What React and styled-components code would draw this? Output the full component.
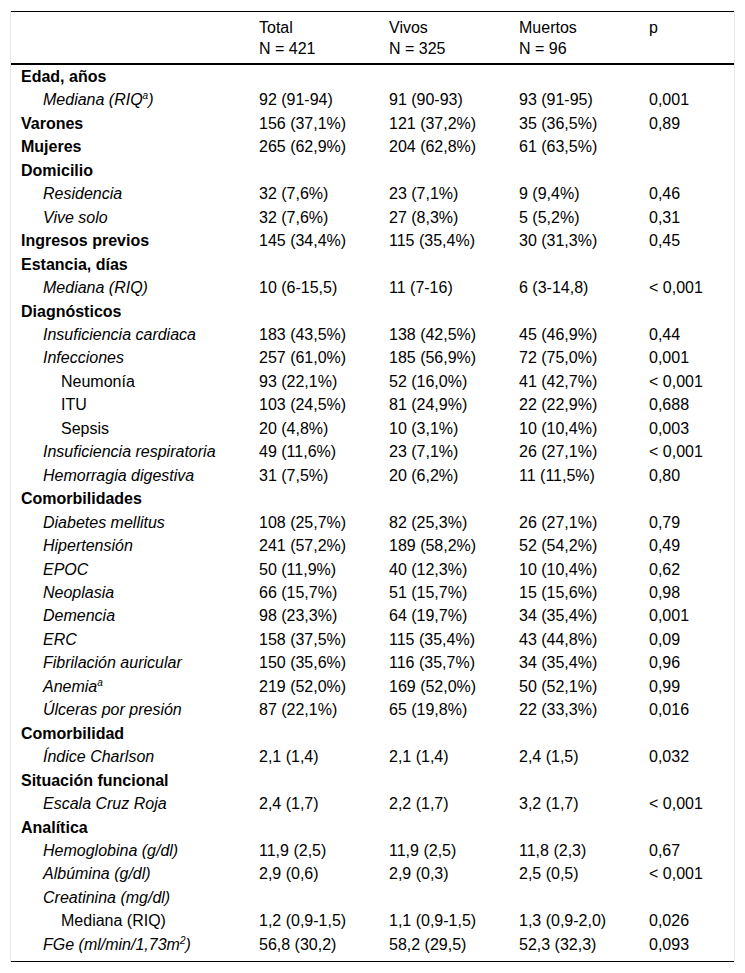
import React from "react";
import styled, { createGlobalStyle } from "styled-components";

const GlobalStyle = createGlobalStyle`
  body {
    margin: 0;
    background: #fff;
    font-family: "Liberation Sans", Arial, sans-serif;
    color: #000;
  }
`;

const Frame = styled.div`
  margin: 11px 0 0 10px;
  width: 725px;
  box-sizing: border-box;
  border-left: 1px solid #e6e6e6;
  border-right: 1px solid #e6e6e6;
`;

const Table = styled.table`
  width: 100%;
  border-collapse: collapse;
  table-layout: fixed;
  font-size: 16px;
  border-top: 1px solid #000;
  border-bottom: 1px solid #000;

  th,
  td {
    box-sizing: border-box;
  }
`;

const HeadRow = styled.tr`
  border-bottom: 2px solid #000;
`;

const HeadCell = styled.th`
  text-align: left;
  font-weight: normal;
  vertical-align: top;
  padding: 5px 10px 4px;
  line-height: 21px;
  width: ${(p) => p.$w}px;
`;

const Cell = styled.td`
  padding: 2px 10px ${(p) => (p.$last ? 7 : 2)}px;
  line-height: 19.45px;
  white-space: nowrap;
  vertical-align: top;
`;

const Label = styled(Cell)`
  padding-left: ${(p) => [10, 32, 50][p.$level]}px;
  font-weight: ${(p) => (p.$kind === "b" ? "bold" : "normal")};
  font-style: ${(p) => (p.$kind === "i" ? "italic" : "normal")};
`;

const Sup = styled.sup`
  font-size: 10px;
  line-height: 0;
  vertical-align: 6px;
`;

const columns = [
  { w: 238, title: "", n: "" },
  { w: 130, title: "Total", n: "N = 421" },
  { w: 130, title: "Vivos", n: "N = 325" },
  { w: 130, title: "Muertos", n: "N = 96" },
  { w: 95, title: "p", n: "" },
];

// [etiqueta, nivel, estilo, valores]
const rows = [
  ["Edad, años", 0, "b"],
  [<>Mediana (RIQ<Sup>a</Sup>)</>, 1, "i", ["92 (91-94)", "91 (90-93)", "93 (91-95)", "0,001"]],
  ["Varones", 0, "b", ["156 (37,1%)", "121 (37,2%)", "35 (36,5%)", "0,89"]],
  ["Mujeres", 0, "b", ["265 (62,9%)", "204 (62,8%)", "61 (63,5%)", ""]],
  ["Domicilio", 0, "b"],
  ["Residencia", 1, "i", ["32 (7,6%)", "23 (7,1%)", "9 (9,4%)", "0,46"]],
  ["Vive solo", 1, "i", ["32 (7,6%)", "27 (8,3%)", "5 (5,2%)", "0,31"]],
  ["Ingresos previos", 0, "b", ["145 (34,4%)", "115 (35,4%)", "30 (31,3%)", "0,45"]],
  ["Estancia, días", 0, "b"],
  ["Mediana (RIQ)", 1, "i", ["10 (6-15,5)", "11 (7-16)", "6 (3-14,8)", "< 0,001"]],
  ["Diagnósticos", 0, "b"],
  ["Insuficiencia cardiaca", 1, "i", ["183 (43,5%)", "138 (42,5%)", "45 (46,9%)", "0,44"]],
  ["Infecciones", 1, "i", ["257 (61,0%)", "185 (56,9%)", "72 (75,0%)", "0,001"]],
  ["Neumonía", 2, "n", ["93 (22,1%)", "52 (16,0%)", "41 (42,7%)", "< 0,001"]],
  ["ITU", 2, "n", ["103 (24,5%)", "81 (24,9%)", "22 (22,9%)", "0,688"]],
  ["Sepsis", 2, "n", ["20 (4,8%)", "10 (3,1%)", "10 (10,4%)", "0,003"]],
  ["Insuficiencia respiratoria", 1, "i", ["49 (11,6%)", "23 (7,1%)", "26 (27,1%)", "< 0,001"]],
  ["Hemorragia digestiva", 1, "i", ["31 (7,5%)", "20 (6,2%)", "11 (11,5%)", "0,80"]],
  ["Comorbilidades", 0, "b"],
  ["Diabetes mellitus", 1, "i", ["108 (25,7%)", "82 (25,3%)", "26 (27,1%)", "0,79"]],
  ["Hipertensión", 1, "i", ["241 (57,2%)", "189 (58,2%)", "52 (54,2%)", "0,49"]],
  ["EPOC", 1, "i", ["50 (11,9%)", "40 (12,3%)", "10 (10,4%)", "0,62"]],
  ["Neoplasia", 1, "i", ["66 (15,7%)", "51 (15,7%)", "15 (15,6%)", "0,98"]],
  ["Demencia", 1, "i", ["98 (23,3%)", "64 (19,7%)", "34 (35,4%)", "0,001"]],
  ["ERC", 1, "i", ["158 (37,5%)", "115 (35,4%)", "43 (44,8%)", "0,09"]],
  ["Fibrilación auricular", 1, "i", ["150 (35,6%)", "116 (35,7%)", "34 (35,4%)", "0,96"]],
  [<>Anemia<Sup>a</Sup></>, 1, "i", ["219 (52,0%)", "169 (52,0%)", "50 (52,1%)", "0,99"]],
  ["Úlceras por presión", 1, "i", ["87 (22,1%)", "65 (19,8%)", "22 (33,3%)", "0,016"]],
  ["Comorbilidad", 0, "b"],
  ["Índice Charlson", 1, "i", ["2,1 (1,4)", "2,1 (1,4)", "2,4 (1,5)", "0,032"]],
  ["Situación funcional", 0, "b"],
  ["Escala Cruz Roja", 1, "i", ["2,4 (1,7)", "2,2 (1,7)", "3,2 (1,7)", "< 0,001"]],
  ["Analítica", 0, "b"],
  ["Hemoglobina (g/dl)", 1, "i", ["11,9 (2,5)", "11,9 (2,5)", "11,8 (2,3)", "0,67"]],
  ["Albúmina (g/dl)", 1, "i", ["2,9 (0,6)", "2,9 (0,3)", "2,5 (0,5)", "< 0,001"]],
  ["Creatinina (mg/dl)", 1, "i"],
  ["Mediana (RIQ)", 2, "n", ["1,2 (0,9-1,5)", "1,1 (0,9-1,5)", "1,3 (0,9-2,0)", "0,026"]],
  [<>FGe (ml/min/1,73m<Sup>2</Sup>)</>, 1, "i", ["56,8 (30,2)", "58,2 (29,5)", "52,3 (32,3)", "0,093"]],
];

export default function App() {
  return (
    <>
      <GlobalStyle />
      <Frame>
        <Table>
          <thead>
            <HeadRow>
              {columns.map((col, i) => (
                <HeadCell key={i} $w={col.w}>
                  {col.title}
                  {col.n && (
                    <>
                      <br />
                      {col.n}
                    </>
                  )}
                </HeadCell>
              ))}
            </HeadRow>
          </thead>
          <tbody>
            {rows.map(([label, level, kind, values = ["", "", "", ""]], i) => {
              const last = i === rows.length - 1;
              return (
                <tr key={i}>
                  <Label $level={level} $kind={kind} $last={last}>
                    {label}
                  </Label>
                  {values.map((v, j) => (
                    <Cell key={j} $last={last}>
                      {v}
                    </Cell>
                  ))}
                </tr>
              );
            })}
          </tbody>
        </Table>
      </Frame>
    </>
  );
}
